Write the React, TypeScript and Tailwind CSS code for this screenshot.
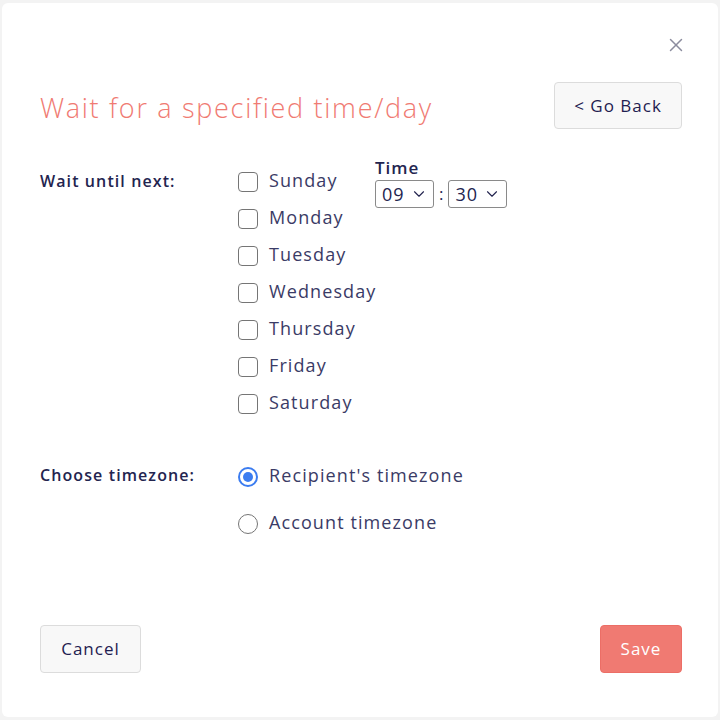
import { X, ChevronDown } from "lucide-react";

const days = ["Sunday", "Monday", "Tuesday", "Wednesday", "Thursday", "Friday", "Saturday"];

function TimeSelect({ value }: { value: string }) {
  return (
    <div className="flex h-[28px] w-[59px] items-center justify-between rounded-[3px] border border-[#8a8a8a] bg-white pl-[6px] pr-[5px]">
      <span className="text-[18px] font-medium leading-none tracking-[1px] text-[#23244f]">{value}</span>
      <ChevronDown className="h-[18px] w-[18px] text-[#23244f]" strokeWidth={1.5} />
    </div>
  );
}

export default function App() {
  return (
    <div
      className="h-[720px] w-[720px] bg-[#f3f3f3] pt-[3px] px-[2px] pb-[3px]"
      style={{ fontFamily: '"Open Sans", "Noto Sans", sans-serif' }}
    >
      <div className="flex h-full flex-col rounded-[6px] bg-white pl-[38px] pr-[36px]">
        {/* close */}
        <div className="flex justify-end pt-[31px]">
          <X className="mr-[-5px] h-[22px] w-[22px] text-[#8b8c9e]" strokeWidth={1.6} />
        </div>

        {/* header */}
        <div className="mt-[26px] flex items-center justify-between">
          <h1 className="pt-[6px] text-[27px] font-light tracking-[1.7px] text-[#f07a72]">
            Wait for a specified time/day
          </h1>
          <button className="h-[47px] w-[128px] rounded-[4px] border border-[#dcdcdc] bg-[#f8f8f8] text-[17px] font-medium tracking-[1px] text-[#1f2050]">
            &lt; Go Back
          </button>
        </div>

        {/* days */}
        <div className="mt-[39px] flex">
          <div className="w-[198px] pt-[1px] text-[16px] font-semibold tracking-[1.1px] text-[#23244f]">Wait until next:</div>
          <div className="flex w-[137px] flex-col gap-[13px]">
            {days.map((d) => (
              <label key={d} className="flex h-[24px] items-center gap-[11px] whitespace-nowrap">
                <span className="mt-[3px] h-[20px] w-[20px] shrink-0 rounded-[4px] border-[1.5px] border-[#757575] bg-white" />
                <span className="text-[18px] tracking-[1.1px] text-[#3a3b66]">{d}</span>
              </label>
            ))}
          </div>
          <div className="flex flex-col">
            <div className="mt-[-12px] text-[17px] font-semibold leading-[24px] tracking-[1px] text-[#23244f]">Time</div>
            <div className="flex items-center">
              <TimeSelect value="09" />
              <span className="mx-[5px] text-[17px] text-[#23244f]">:</span>
              <TimeSelect value="30" />
            </div>
          </div>
        </div>

        {/* timezone */}
        <div className="mt-[49px] flex">
          <div className="w-[198px] text-[16px] font-semibold tracking-[1.1px] text-[#23244f]">Choose timezone:</div>
          <div className="flex flex-col gap-[23px]">
            <label className="flex h-[24px] items-center gap-[11px]">
              <span className="mt-[3px] flex h-[20px] w-[20px] items-center justify-center rounded-full border-[2px] border-[#3b7cf0] bg-white">
                <span className="h-[10px] w-[10px] rounded-full bg-[#3b7cf0]" />
              </span>
              <span className="text-[18px] tracking-[1.1px] text-[#3a3b66]">Recipient's timezone</span>
            </label>
            <label className="flex h-[24px] items-center gap-[11px]">
              <span className="mt-[3px] h-[20px] w-[20px] rounded-full border-[1.5px] border-[#757575] bg-white" />
              <span className="text-[18px] tracking-[1.1px] text-[#3a3b66]">Account timezone</span>
            </label>
          </div>
        </div>

        {/* footer */}
        <div className="mt-auto mb-[44px] flex justify-between">
          <button className="h-[48px] w-[101px] rounded-[4px] border border-[#dcdcdc] bg-[#f8f8f8] text-[17px] font-medium tracking-[1px] text-[#1f2050]">
            Cancel
          </button>
          <button className="h-[48px] w-[82px] rounded-[4px] border border-[#ec6e66] bg-[#f07a72] text-[17px] font-medium tracking-[1px] text-white">
            Save
          </button>
        </div>
      </div>
    </div>
  );
}
